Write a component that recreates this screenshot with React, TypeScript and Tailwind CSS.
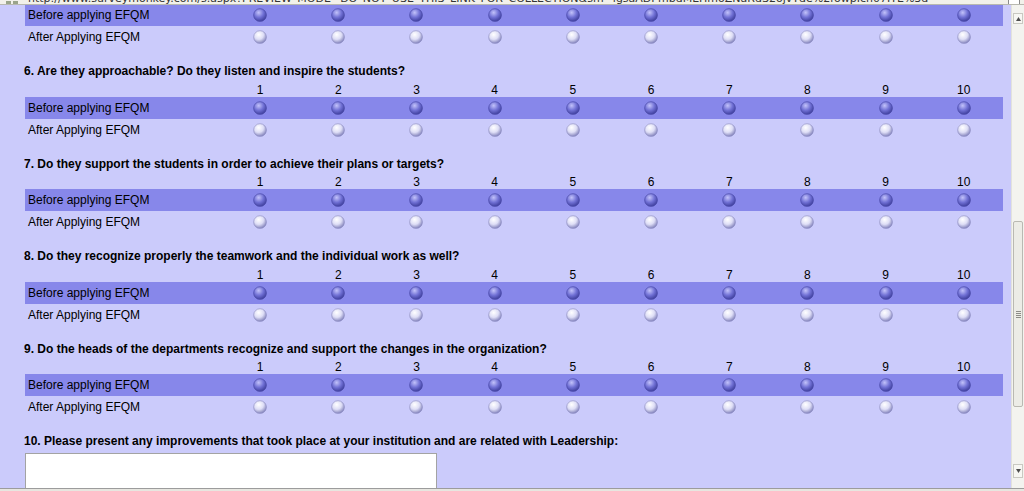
import React from "react";

const COLS = [1, 2, 3, 4, 5, 6, 7, 8, 9, 10];

const questions = [
  "6. Are they approachable? Do they listen and inspire the students?",
  "7. Do they support the students in order to achieve their plans or targets?",
  "8. Do they recognize properly the teamwork and the individual work as well?",
  "9. Do the heads of the departments recognize and support the changes in the organization?",
];

// little 3d radio button, dark on highlighted rows
const Radio = ({ dark }: { dark?: boolean }) => (
  <svg width="14" height="14" viewBox="0 0 14 14">
    <circle cx="7" cy="7" r="6.6" fill={dark ? "url(#radioDark)" : "url(#radioLight)"} />
    <circle cx="7" cy="7" r="6.3" fill="none" stroke={dark ? "#4f4fae" : "#9494c8"} strokeWidth="0.7" />
  </svg>
);

const ScaleRow = ({ label, dark }: { label: string; dark?: boolean }) => (
  <div className={`flex h-[22px] items-center ${dark ? "bg-[#8787ea]" : ""}`}>
    <div className="w-[196px] pl-[3px]">{label}</div>
    {COLS.map((c) => (
      <div key={c} className="flex w-[78.2px] justify-center">
        <Radio dark={dark} />
      </div>
    ))}
  </div>
);

const Question = ({ title }: { title: string }) => (
  <div className="pt-[15px]">
    <div className="h-[16px] leading-[16px] font-bold">{title}</div>
    <div className="mt-[3.5px] ml-px flex h-[14px] leading-[14px]">
      <div className="w-[196px]" />
      {COLS.map((c) => (
        <div key={c} className="w-[78.2px] text-center">
          {c}
        </div>
      ))}
    </div>
    <div className="ml-px">
      <ScaleRow label="Before applying EFQM" dark />
      <ScaleRow label="After Applying EFQM" />
    </div>
  </div>
);

export default function App() {
  return (
    <div className="relative h-[491px] w-[1024px] overflow-hidden bg-[#cbcbfb] font-['Liberation_Sans',Arial,sans-serif] text-[12px] text-black">
      <svg width="0" height="0" className="absolute">
        <defs>
          <radialGradient id="radioLight" cx="40%" cy="32%" r="72%">
            <stop offset="0" stopColor="#ffffff" />
            <stop offset="0.5" stopColor="#dedef6" />
            <stop offset="1" stopColor="#7777b4" />
          </radialGradient>
          <radialGradient id="radioDark" cx="40%" cy="32%" r="72%">
            <stop offset="0" stopColor="#c2c2fa" />
            <stop offset="0.5" stopColor="#7272d6" />
            <stop offset="1" stopColor="#383896" />
          </radialGradient>
        </defs>
      </svg>

      {/* status bar, only the lower edge is visible */}
      <div className="relative z-10 flex h-[5px] items-end overflow-hidden border-b border-[#b8b8b0] bg-[#f2f1ea]">
        <div className="ml-[6px] mb-[-1px] flex w-[14px] gap-[2px]">
          <div className="h-[4px] w-[5px] bg-[#9aa48a]" />
          <div className="h-[4px] w-[5px] bg-[#9aa48a]" />
        </div>
        <div className="ml-[8px] h-[5px] overflow-hidden">
          <div className="-mt-[6px] whitespace-nowrap font-['DejaVu_Sans',sans-serif] text-[11px] leading-[11px] text-[#333]">
            http://www.surveymonkey.com/s.aspx?PREVIEW_MODE=DO_NOT_USE_THIS_LINK_FOR_COLLECTION&amp;sm=lgsaADPmbdMEHmoZNaRdS2ojvTde%2fowpIcn07ITE%3d
          </div>
        </div>
        <div className="ml-auto mr-[4px] h-[5px] w-[12px] border border-b-0 border-[#8a8a8a] bg-white" />
      </div>

      <div className="flex h-[483px]">
        {/* page */}
        <div className="flex-1 overflow-hidden pl-[24px] pr-[8px]">
          <div className="-mt-px ml-px">
            <ScaleRow label="Before applying EFQM" dark />
            <ScaleRow label="After Applying EFQM" />
          </div>

          {questions.map((q) => (
            <Question key={q} title={q} />
          ))}

          <div className="pt-[15px]">
            <div className="h-[16px] leading-[16px] font-bold">
              10. Please present any improvements that took place at your institution and are related with Leadership:
            </div>
            <div className="mt-[3.5px] ml-px h-[60px] w-[412px] border border-[#a3a3a3] bg-white" />
          </div>
        </div>

        {/* scrollbar */}
        <div className="flex w-[13px] flex-col border-l border-[#e2e2dc] bg-[#f3f3ef]">
          <div className="mx-px mt-[8px] flex h-[11px] items-center justify-center border border-[#c9c9c2] bg-[#f7f7f3]">
            <svg width="5" height="4" viewBox="0 0 5 4">
              <path d="M0 4 L2.5 0 L5 4 Z" fill="#4d4d4d" />
            </svg>
          </div>
          <div className="flex-1">
            <div className="mx-px mt-[197px] flex h-[186px] items-center justify-center rounded-[2px] border border-[#b9b9b2] bg-[#ecece6]">
              <div className="flex flex-col gap-px">
                <div className="h-px w-[5px] bg-[#8c8c86]" />
                <div className="h-px w-[5px] bg-[#8c8c86]" />
                <div className="h-px w-[5px] bg-[#8c8c86]" />
                <div className="h-px w-[5px] bg-[#8c8c86]" />
              </div>
            </div>
          </div>
          <div className="mx-px mb-[10px] flex h-[14px] items-center justify-center border border-[#c9c9c2] bg-[#f7f7f3]">
            <svg width="5" height="4" viewBox="0 0 5 4">
              <path d="M0 0 L2.5 4 L5 0 Z" fill="#4d4d4d" />
            </svg>
          </div>
        </div>
      </div>

      {/* window edge */}
      <div className="absolute bottom-0 left-0 h-[3px] w-full border-t border-[#9c9c9c] bg-[#e7e6e0]" />
    </div>
  );
}
